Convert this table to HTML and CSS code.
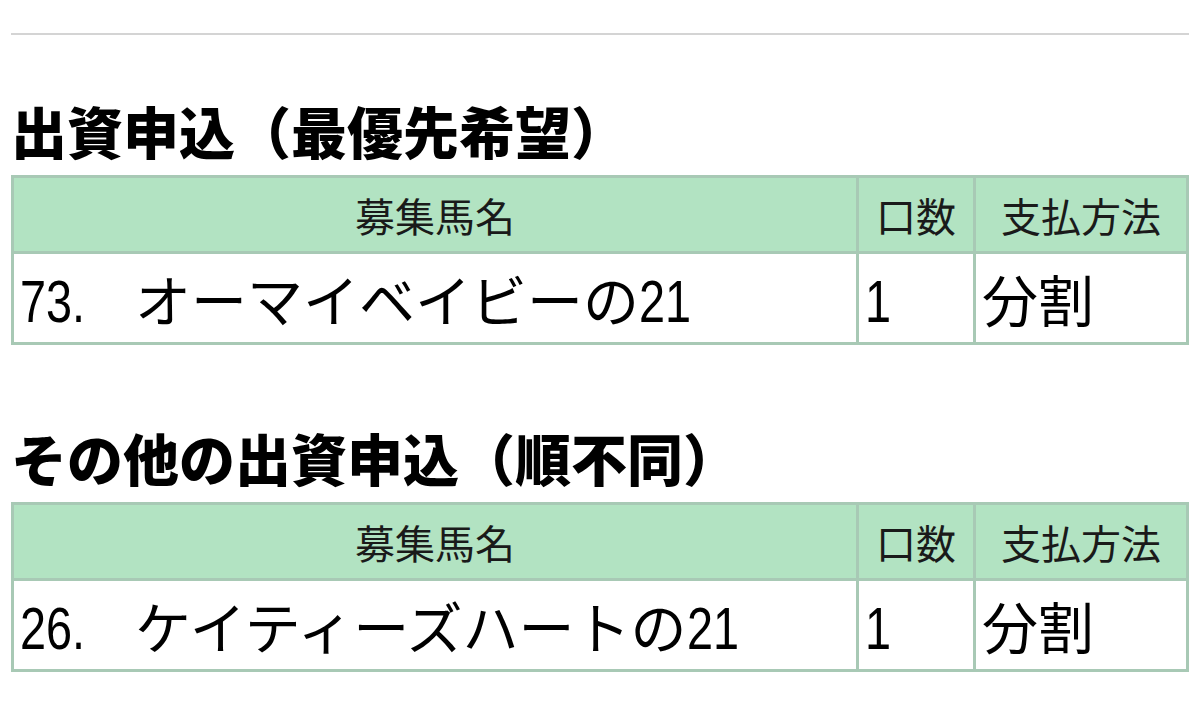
FILE: index.html
```html
<!DOCTYPE html>
<html lang="ja">
<head>
<meta charset="utf-8">
<link rel="stylesheet" href="styles.css">
</head>
<body>
<div class="page">
  <hr class="rule">
  <h2 class="title first">出資申込（最優先希望）</h2>
  <table class="apply">
    <thead>
      <tr><th class="c-name">募集馬名</th><th class="c-qty">口数</th><th class="c-pay">支払方法</th></tr>
    </thead>
    <tbody>
      <tr><td><span class="num lead">73.</span> オーマイベイビーの<span class="num">21</span></td><td><span class="num">1</span></td><td>分割</td></tr>
    </tbody>
  </table>
  <h2 class="title second">その他の出資申込（順不同）</h2>
  <table class="apply">
    <thead>
      <tr><th class="c-name">募集馬名</th><th class="c-qty">口数</th><th class="c-pay">支払方法</th></tr>
    </thead>
    <tbody>
      <tr><td><span class="num lead">26.</span> ケイティーズハートの<span class="num">21</span></td><td><span class="num">1</span></td><td>分割</td></tr>
    </tbody>
  </table>
</div>
</body>
</html>
```
FILE: styles.css
```css
html, body {
  margin: 0;
  padding: 0;
  background: #ffffff;
}
body {
  font-family: "Noto Sans CJK JP", "Noto Sans", sans-serif;
  color: #000;
}
.page {
  padding: 0 11px 0 11px;
}
.rule {
  margin: 33px 0 0 0;
  border: 0;
  border-top: 2px solid #d4d4d4;
  height: 0;
}
.title {
  font-size: 56px;
  font-weight: 900;
  line-height: 62px;
  margin: 0;
  color: #000;
}
.title.first {
  margin-top: 64px;
}
.title.second {
  margin-top: 81px;
}
.apply {
  width: 1178px;
  border-collapse: collapse;
  margin-top: 14px;
  border: 3px solid #a8c9b5;
  table-layout: fixed;
}
.apply th, .apply td {
  border: 3px solid #a8c9b5;
}
.apply th {
  background: #b2e3c2;
  font-size: 40px;
  font-weight: 400;
  color: #1a1a1a;
  height: 73px;
  padding: 0;
  text-align: center;
}
.apply td {
  font-size: 56px;
  line-height: 80px;
  height: 88px;
  padding: 0 6px;
  text-align: left;
  white-space: nowrap;
  vertical-align: middle;
}
.num {
  display: inline-block;
  font-family: "Liberation Sans", sans-serif;
  font-size: 60px;
  line-height: 1;
  transform: scaleX(0.78);
  transform-origin: left center;
}
.num.lead {
  margin-right: 19px;
}
.c-name { width: 842px; }
.c-qty { width: 114px; }
.c-pay { width: auto; }
```
